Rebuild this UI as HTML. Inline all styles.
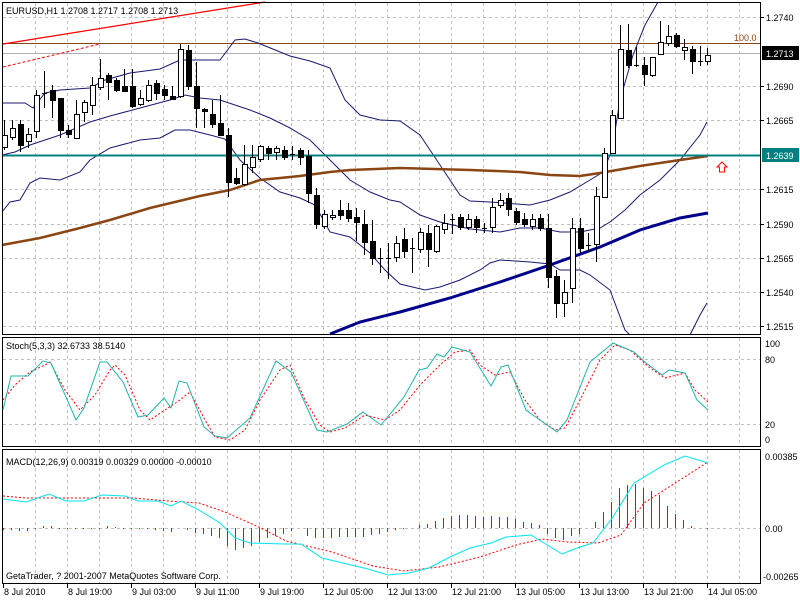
<!DOCTYPE html>
<html><head><meta charset="utf-8"><style>
html,body{margin:0;padding:0;background:#fff;width:800px;height:600px;overflow:hidden}
svg{display:block}
text{font-family:"Liberation Sans",sans-serif;font-size:9px;fill:#000}
</style></head><body>
<svg id="s" width="800" height="600" viewBox="0 0 800 600" xmlns="http://www.w3.org/2000/svg">
<rect x="0" y="0" width="800" height="600" fill="#fff"/>
<g id="grid" stroke="#c0c0c0" stroke-dasharray="3,3" stroke-width="1"></g>
<line x1="3" y1="43.5" x2="760" y2="43.5" stroke="#8b4513" stroke-width="1"/>
<line x1="3" y1="53.5" x2="760" y2="53.5" stroke="#b0b0b0" stroke-width="1"/>
<line x1="3" y1="44" x2="265" y2="2" stroke="#f00" stroke-width="1.2"/>
<line x1="3" y1="67" x2="100" y2="44" stroke="#f00" stroke-width="1" stroke-dasharray="3,2"/>
<polyline fill="none" stroke="#191970" stroke-width="1" points="2,103 25,103 33,108 45,93 60,90 90,88 105,80 130,73 160,69 180,60 220,60 235,40 245,39 258,43 290,56 310,61 330,68 345,100 360,115 380,120 400,121 420,135 440,165 460,195 470,201 490,202 530,205 550,200 570,192 590,180 603,172 612,150 620,100 633,55 645,25 658,2"/>
<polyline fill="none" stroke="#191970" stroke-width="1" points="2,155 15,152 30,145 45,140 60,135 90,122 110,116 140,108 170,100 185,95 200,98 220,100 250,110 270,118 290,128 310,140 330,160 350,180 370,192 390,200 400,202 420,215 440,222 470,229 500,232 520,228 540,228 560,232 580,232 600,228 610,222 625,210 640,195 660,180 680,160 700,135 707,122"/>
<polyline fill="none" stroke="#191970" stroke-width="1" points="2,212 10,202 20,200 30,183 40,178 60,180 80,172 90,160 110,148 140,140 160,138 175,130 190,130 210,135 225,139 240,160 260,178 280,192 300,198 315,205 330,232 350,237 370,253 385,270 400,284 425,290 440,287 460,280 480,270 490,263 500,260 530,262 550,264 560,270 580,270 590,275 610,290 625,330 630,335"/>
<polyline fill="none" stroke="#191970" stroke-width="1" points="690,335 700,315 707,303"/>
<polyline fill="none" stroke="#8b4513" stroke-width="2.5" points="2,245 40,238 80,228 110,220 150,208 200,196 230,190 260,180 300,176 330,172 350,170 400,168 470,170 520,172 550,175 580,176 600,173 640,166 680,160 708,156"/>
<polyline fill="none" stroke="#00008b" stroke-width="3" points="330,334 360,322 400,312 450,298 500,282 550,265 600,247 640,230 680,218 708,213"/>
<line x1="3" y1="155.5" x2="760" y2="155.5" stroke="#008080" stroke-width="2"/>
<g id="candles"></g>
<rect x="2.5" y="2.5" width="758" height="332" fill="none" stroke="#000"/>
<rect x="2.5" y="337.5" width="758" height="109" fill="none" stroke="#000"/>
<rect x="2.5" y="449.5" width="758" height="134" fill="none" stroke="#000"/>
<text x="6" y="14">EURUSD,H1  1.2708 1.2717 1.2708 1.2713</text>
<text x="734" y="41" style="fill:#8b4513">100.0</text>
<path d="M722,162 L727,167 L724.5,167 L724.5,172 L719.5,172 L719.5,167 L717,167 Z" fill="#fff" stroke="#f00" stroke-width="1"/>
<g id="axis"></g>
<rect x="762" y="46" width="37" height="14" fill="#000"/>
<text x="766" y="57" style="fill:#fff">1.2713</text>
<rect x="762" y="148" width="37" height="14" fill="#008080"/>
<text x="766" y="159" style="fill:#fff">1.2639</text>
<text x="6" y="349">Stoch(5,3,3) 32.6733 38.5140</text>
<line x1="3" y1="359.5" x2="760" y2="359.5" stroke="#c0c0c0" stroke-dasharray="3,3"/>
<line x1="3" y1="424.5" x2="760" y2="424.5" stroke="#c0c0c0" stroke-dasharray="3,3"/>
<polyline fill="none" stroke="#f00" stroke-width="1" stroke-dasharray="2,2" points="3,400 15,385 30,372 45,365 50,362 65,390 80,410 95,395 110,370 115,365 125,375 140,410 150,420 165,410 180,400 190,392 205,420 215,437 230,440 245,430 260,400 280,370 290,365 305,400 320,425 330,432 345,428 365,415 385,420 400,410 420,385 440,365 455,352 470,350 480,365 495,375 510,372 525,400 540,420 555,430 565,428 580,400 600,360 615,345 630,350 650,368 665,378 685,373 695,390 708,402"/>
<polyline fill="none" stroke="#20b2aa" stroke-width="1" points="3,410 11,376 28,376 43,361 51,363 76,420 84,408 100,362 107,362 123,382 138,417 148,415 164,398 171,408 179,381 187,383 204,427 215,436 227,438 250,418 276,361 291,372 317,430 327,432 347,424 363,412 381,425 404,397 419,370 427,368 437,354 444,357 452,347 470,352 491,386 501,367 508,365 526,410 537,418 557,432 567,420 590,362 613,343 634,352 646,363 662,375 669,370 685,373 697,400 708,410"/>
<text x="765" y="347">100</text><text x="765" y="363">80</text><text x="765" y="428">20</text><text x="765" y="443">0</text>
<line x1="3" y1="528.5" x2="760" y2="528.5" stroke="#c0c0c0" stroke-dasharray="3,3"/>
<g id="hist"></g>
<polyline fill="none" stroke="#f00" stroke-width="1" stroke-dasharray="2,2" points="3,496 26,498 61,498 133,498 169,501 199,503 225,512 261,528 286,541 332,552 373,566 404,571 439,567 480,557 516,545 542,539 567,542 598,543 621,535 644,503 669,487 708,462"/>
<polyline fill="none" stroke="#00e5ee" stroke-width="1" points="3,499 26,502 49,494 66,501 84,501 102,495 125,496 138,501 158,501 171,506 181,501 199,510 220,523 235,538 250,543 286,544 301,544 322,558 347,564 368,569 388,575 409,573 429,568 450,557 470,548 491,543 506,537 531,535 544,543 562,554 577,548 593,543 613,517 634,483 664,465 685,456 708,463"/>
<text x="6" y="465">MACD(12,26,9) 0.00319 0.00329 0.00000 -0.00010</text>
<text x="6" y="579">GetaTrader, ? 2001-2007 MetaQuotes Software Corp.</text>
<text x="765" y="460">0.00385</text><text x="765" y="532">0.00</text><text x="763" y="580">-0.00265</text>
<g id="time"></g>
</svg>
<script>
var NS="http://www.w3.org/2000/svg";
function el(p,t,a,txt){var e=document.createElementNS(NS,t);for(var k in a)e.setAttribute(k,a[k]);if(txt)e.textContent=txt;document.getElementById(p).appendChild(e);return e;}
for(var x=35;x<760;x+=32){el("grid","line",{x1:x+.5,y1:3,x2:x+.5,y2:334});el("grid","line",{x1:x+.5,y1:338,x2:x+.5,y2:446});el("grid","line",{x1:x+.5,y1:450,x2:x+.5,y2:583});}
var py=[[17,"1.2740"],[86,"1.2690"],[120,"1.2665"],[189,"1.2615"],[224,"1.2590"],[258,"1.2565"],[292,"1.2540"],[326,"1.2515"]];
py.forEach(function(p){el("grid","line",{x1:3,y1:p[0]+.5,x2:760,y2:p[0]+.5});el("axis","line",{x1:760,y1:p[0]+.5,x2:764,y2:p[0]+.5,stroke:"#000"});el("axis","text",{x:766,y:p[0]+4},p[1]);});
var C=[["w",135,147,120,150],["w",128,137,120,140],["b",124,145,120,152],["w",134,141,128,148],["w",95,131,90,138],["d",93,94,71,108],["b",90,100,85,118],["b",98,130,98,138],["b",130,134,125,138],["w",114,138,100,138],["w",102,112,100,122],["w",85,105,77,115],["w",78,87,59,90],["b",75,82,73,100],["b",80,90,78,92],["b",86,91,69,92],["b",86,106,69,108],["w",98,104,90,106],["w",85,100,80,102],["b",83,93,80,100],["b",89,95,85,100],["b",96,99,86,100],["w",49,96,44,98],["b",50,86,45,90],["b",86,108,62,128],["b",109,111,108,128],["b",114,124,100,128],["b",123,135,95,135],["b",135,182,128,197],["b",178,183,168,185],["w",164,184,145,186],["w",157,167,145,173],["w",146,159,145,162],["b",148,153,146,160],["w",148,152,146,160],["b",150,157,146,160],["d",154,155,146,160],["b",150,157,148,165],["b",156,193,150,203],["b",195,224,188,229],["w",214,226,210,229],["w",215,217,210,220],["b",210,215,200,220],["b",210,218,203,222],["b",217,222,208,241],["b",224,242,210,255],["b",241,258,220,265],["d",258,258,248,273],["d",258,258,243,279],["w",243,257,236,262],["b",239,251,228,258],["d",248,248,238,273],["w",232,249,228,253],["b",233,249,225,267],["w",226,251,225,253],["w",223,229,214,234],["d",219,219,214,234],["b",217,227,214,230],["w",219,227,214,230],["b",219,227,216,233],["d",228,228,223,233],["w",207,227,198,233],["w",200,205,193,208],["b",198,209,193,216],["b",211,222,208,225],["b",219,224,213,227],["w",219,226,214,230],["b",218,228,214,231],["b",228,277,214,288],["b",276,303,270,318],["w",292,303,280,317],["w",228,288,218,303],["b",228,248,218,253],["d",245,245,233,252],["w",196,244,187,262],["w",153,197,148,198],["w",115,153,110,153],["w",49,118,25,118],["b",50,65,24,68],["d",65,65,47,67],["b",65,74,57,86],["w",57,75,57,77],["w",42,54,21,55],["w",36,43,25,46],["b",35,46,33,48],["w",47,50,39,60],["b",49,61,46,74],["d",61,61,46,66],["w",55,61,48,65]];
C.forEach(function(c,i){var x=4+i*8;if(i>=88)x=707;
el("candles","line",{x1:x+.5,y1:c[3],x2:x+.5,y2:c[4],stroke:"#000"});
if(c[0]=="d"){el("candles","line",{x1:x-2,y1:c[1]+.5,x2:x+3,y2:c[1]+.5,stroke:"#000"});}
else el("candles","rect",{x:x-2+.5,y:c[1]+.5,width:5,height:Math.max(1,c[2]-c[1]),fill:c[0]=="w"?"#fff":"#000",stroke:"#000"});});
var H={3:2,11:2,19:3,27:3,35:1,43:-2,51:-2,59:1,67:1,75:1,83:1,91:1,99:1,107:-2,115:-1,123:1,131:1,139:1,147:1,155:2,163:3,171:4,187:2,195:5,203:6,211:8,219:10,227:18,235:22,243:20,251:18,259:14,267:10,275:8,283:6,291:3,307:8,315:10,323:10,331:10,339:9,347:9,355:9,363:9,371:7,379:6,387:4,395:2,403:1,419:-3,427:-4,435:-7,443:-10,451:-12,459:-13,467:-13,475:-12,483:-11,491:-12,499:-11,507:-11,515:-9,523:-6,531:-5,539:-3,547:6,555:10,563:12,571:8,579:6,595:-6,603:-16,611:-26,619:-40,627:-43,635:-44,643:-40,651:-37,659:-33,667:-22,675:-14,683:-8,691:-2,707:1};
for(var k in H){var v=H[k],xx=+k+.5;el("hist","line",{x1:xx,y1:528,x2:xx,y2:528+v,stroke:v>0?"#f00":"#008000"});}
var T=["8 Jul 2010","8 Jul 19:00","9 Jul 03:00","9 Jul 11:00","9 Jul 19:00","12 Jul 05:00","12 Jul 13:00","12 Jul 21:00","13 Jul 05:00","13 Jul 13:00","13 Jul 21:00","14 Jul 05:00"];
T.forEach(function(t,i){var x=3+i*64;el("time","line",{x1:x+.5,y1:584,x2:x+.5,y2:588,stroke:"#000"});el("time","text",{x:x+1,y:595},t);});
</script>
</body></html>
